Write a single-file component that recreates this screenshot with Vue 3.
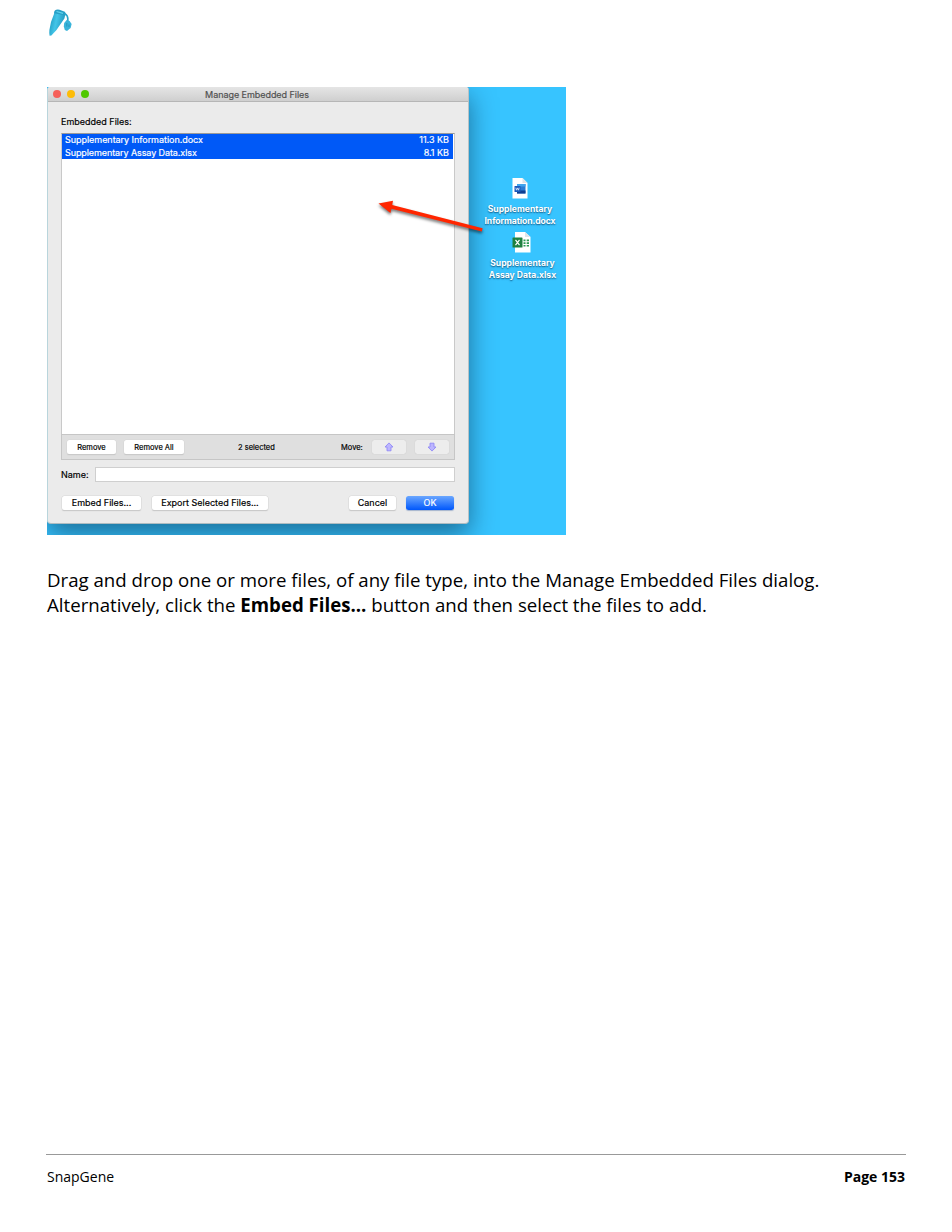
<script setup>
const files = [
  { name: 'Supplementary Information.docx', size: '11.3 KB', cls: 'docx' },
  { name: 'Supplementary Assay Data.xlsx', size: '8.1 KB', cls: 'xlsx' },
]
</script>

<template>
  <main class="page">
    <header class="brand">
      <svg width="24" height="28" viewBox="0 0 24 28">
        <defs>
          <linearGradient id="tube" x1="0" x2="1" y1="0" y2="0.3">
            <stop offset="0" stop-color="#1690b8" />
            <stop offset="0.5" stop-color="#43c5e8" />
            <stop offset="1" stop-color="#2298bf" />
          </linearGradient>
        </defs>
        <path d="M6.4 2.2 17.4 5.2 16.4 9.5 8.5 21 3.4 26.4 1.6 26.8Q1 25 1.4 21L3 13 6 5Z" fill="url(#tube)" />
        <path d="M6.8 1.5Q8.5 0 11.5 .7L16.8 2.8Q18.6 4.2 17.4 6.6L6.2 4.2Z" fill="#279fc6" />
        <path d="M8.5 2.5 15 4.4" stroke="#62d4ef" stroke-width="1.2" />
        <path d="M16.5 4.8Q20.4 6 19.8 12" fill="none" stroke="#2aa4ca" stroke-width="1.7" />
        <path d="M18.6 11 21.6 12 23.6 15 22.6 19 19 22 16.8 21 15.8 17.5 16.2 14Z" fill="#38b4da" />
        <path d="M18.8 14v3.5M21 15.5v2.5" stroke="#218fb6" stroke-width=".8" />
      </svg>
    </header>

    <section class="desktop">
      <div class="window">
        <div class="titlebar">
          <i class="light red"></i><i class="light yellow"></i><i class="light green"></i>
          <span class="title">Manage Embedded Files</span>
        </div>
        <div class="content">
          <div class="label">Embedded Files:</div>
          <div class="list">
            <div v-for="f in files" :key="f.name" class="row">
              <span :class="f.cls">{{ f.name }}</span><span>{{ f.size }}</span>
            </div>
          </div>
          <div class="tools">
            <button class="btn remove">Remove</button>
            <button class="btn all">Remove All</button>
            <span class="count">2 selected</span>
            <span class="move">Move:</span>
            <button class="btn arrow">
              <svg width="10" height="10" viewBox="0 0 10 10"><path d="M5 .9 9 5H7v3.8H3V5H1Z" fill="#bcb5ff" stroke="#928af6" stroke-width=".9" /></svg>
            </button>
            <button class="btn arrow last">
              <svg width="10" height="10" viewBox="0 0 10 10"><path d="M5 9.1 1 5h2V1.2h4V5h2Z" fill="#bcb5ff" stroke="#928af6" stroke-width=".9" /></svg>
            </button>
          </div>
          <div class="name"><span>Name:</span><div class="input"></div></div>
          <div class="actions">
            <button class="btn embed">Embed Files...</button>
            <button class="btn export">Export Selected Files...</button>
            <button class="btn cancel">Cancel</button>
            <button class="btn ok">OK</button>
          </div>
        </div>
      </div>

      <div class="file word">
        <svg width="16" height="21" viewBox="0 0 16 21">
          <path d="M1 0h9.5L15.5 5v15.5H.5V.5Z" fill="#fff" />
          <path d="M10.5 0v5h5Z" fill="#dfe4e8" />
          <path d="M5 6h8.5v9.5H5Z" fill="#2b7cd3" />
          <path d="M5 6h8.5v2.5H5Z" fill="#41a5ee" />
          <path d="M5 12.5h8.5v3H5Z" fill="#103f91" />
          <rect x="2.5" y="8" width="6" height="6" rx=".5" fill="#185abd" />
          <path d="m3.8 9.7.7 2.5 1-2.3 1 2.3.7-2.5" fill="none" stroke="#fff" stroke-width=".7" />
        </svg>
        <span>Supplementary</span><span class="w2">Information.docx</span>
      </div>
      <div class="file excel">
        <svg width="20" height="21" viewBox="0 0 20 21">
          <path d="M3 0h10L18.5 5v15.5H3Z" fill="#fff" />
          <path d="M13 0v5h5.5Z" fill="#dfe4e8" />
          <path d="M11.5 7.5h2v1.7h-2zm3.2 0h2.3v1.7h-2.3zm-3.2 2.7h2v1.7h-2zm3.2 0h2.3v1.7h-2.3zm-3.2 2.7h2v1.7h-2z m3.2 0h2.3v1.7h-2.3z" fill="#2b9a52" />
          <rect x=".5" y="5.5" width="10" height="10" rx=".6" fill="#1f8040" />
          <path d="m3.5 7.8 4 5.4m0-5.4-4 5.4" stroke="#fff" stroke-width="1.2" />
        </svg>
        <span>Supplementary</span><span>Assay Data.xlsx</span>
      </div>

      <svg class="pointer" width="110" height="40" viewBox="0 0 110 40">
        <path d="M.5 4.4 15 1.8 14.2 6 104.6 29.2 103.8 32.4 13.4 9.7 12.4 14Z" fill="#ff2600" />
      </svg>
    </section>

    <p class="copy">
      <span class="line">Drag and drop one or more files, of any file type, into the Manage Embedded Files dialog.</span>
      <span class="line">Alternatively, click the <b>Embed Files...</b> button and then select the files to add.</span>
    </p>

    <footer class="foot"><span>SnapGene</span><b>Page 153</b></footer>
  </main>
</template>

<style>
body { background: #fff; }
</style>

<style scoped>
* { box-sizing: border-box; }
.page {
  width: 952px; height: 1232px; padding: 9px 46px 0 47px; overflow: hidden;
  display: flex; flex-direction: column; color: #000; font-family: "Open Sans", sans-serif;
}
.brand { height: 78px; padding-left: 1px; flex: none; }
.brand svg { display: block; }
.desktop {
  position: relative; width: 519px; height: 448px; flex: none; overflow: hidden;
  background: #37c4ff; font-family: Inter, sans-serif;
}
.window {
  width: 422px; height: 437px; background: #ebebeb; border-radius: 3px 3px 4px 4px; overflow: hidden;
  border-right: 1px solid #b8c2c5; border-bottom: 1px solid #aebcc1; border-left: 1px solid #b9d5dc;
  box-shadow: 0 10px 26px rgba(0, 25, 50, .5);
  -webkit-text-stroke: .18px currentColor;
}
.titlebar {
  position: relative; height: 15px; display: flex; align-items: center; gap: 6px; padding-left: 5px;
  background: linear-gradient(#e5e5e5, #cfcfcf); border-bottom: 1px solid #b6b6b6;
}
.light { width: 8px; height: 8px; border-radius: 50%; }
.red { background: #f6605a; }
.yellow { background: #fdbc09; }
.green { background: #50c800; }
.title {
  position: absolute; left: 0; right: 2px; top: 1px; text-align: center;
  font-size: 9px; line-height: 14px; letter-spacing: -.05px; color: #505050;
}
.content { padding: 0 13px; }
.label { height: 31px; padding-top: 13px; font-size: 9px; line-height: 14px; }
.list { height: 301px; padding-right: 1px; background: #fff; border: 1px solid #c9c9c9; border-top-color: #9a9a9a; border-bottom: 0; }
.row {
  height: 12.7px; padding: 0 4px 0 3px; display: flex; justify-content: space-between;
  background: #0059f7; color: #fff; font-size: 9px; line-height: 11px; white-space: nowrap;
}
.docx { letter-spacing: -.04px; }
.xlsx { letter-spacing: -.09px; }
.tools {
  height: 26px; display: flex; align-items: center; padding: 0 4px 0 5px; background: #dfdfdf;
  border: 1px solid #c6c6c6; font-size: 7.5px;
}
.btn {
  display: flex; align-items: center; justify-content: center; height: 14px; padding: 0; border: 0;
  border-radius: 2.5px; background: #fff; box-shadow: 0 0 0 .5px #d8d8d8, 0 1px 1px #b8b8b8;
  color: #000; font: inherit; white-space: nowrap;
}
.remove { width: 49px; }
.all { width: 60px; margin-left: 8px; }
.count { width: 38px; margin-left: 54px; white-space: nowrap; }
.move { width: 24px; margin-left: 65px; }
.arrow { width: 34px; margin-left: 7px; background: #ededed; box-shadow: 0 0 1px #bbb; }
.last { margin-left: 9px; }
.name { display: flex; align-items: center; height: 15px; margin-top: 7px; font-size: 9px; }
.name span { width: 34px; }
.input { flex: 1; height: 15px; background: #fff; border: 1px solid #cfcfcf; }
.actions { display: flex; margin-top: 14px; padding: 0 1px; font-size: 9px; }
.actions .btn { padding-bottom: 2px; }
.embed { width: 79px; }
.export { width: 116px; margin-left: 11px; }
.cancel { width: 47px; margin-left: auto; }
.ok { width: 48px; margin-left: 10px; background: linear-gradient(#6ba7ff, #0057fb); color: #fff; box-shadow: 0 1px 1px #a5b4ce; }
.file {
  position: absolute; width: 90px; display: flex; flex-direction: column; align-items: center;
  color: #fff; font-size: 8.6px; line-height: 11.8px; font-weight: 650; text-shadow: 0 1px 1.5px rgba(0, 40, 75, .7);
}
.file svg { margin-bottom: 5px; }
.w2 { letter-spacing: -.08px; }
.word { left: 428px; top: 91px; }
.excel { left: 430.5px; top: 145px; }
.excel svg { margin-left: -2px; }
.pointer { position: absolute; left: 331px; top: 112px; filter: drop-shadow(0 2px 1.5px rgba(0, 0, 0, .55)); }
.copy { margin: 32px 0 0; font-size: 18.67px; line-height: 25px; }
.line { display: block; white-space: pre; }
.foot {
  display: flex; justify-content: space-between; width: 860px; margin: 537px 0 0 -1px; padding: 12px 1px 0;
  border-top: 1px solid #999; font-size: 14px; line-height: 20px;
}
</style>
